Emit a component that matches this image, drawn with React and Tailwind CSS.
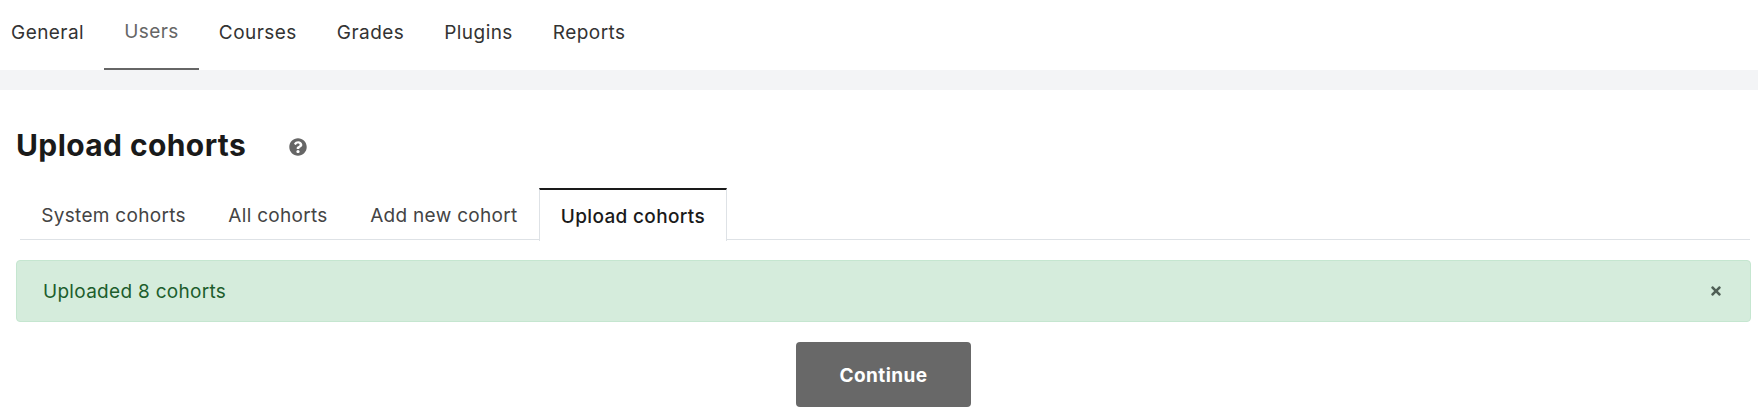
import React from 'react';
import { FaQuestionCircle, FaTimes } from 'react-icons/fa';

const navItems = ['General', 'Users', 'Courses', 'Grades', 'Plugins', 'Reports'];
const tabs = ['System cohorts', 'All cohorts', 'Add new cohort'];

function App() {
    return (
        <div className="w-[1758px] h-[414px] overflow-hidden bg-white font-['Inter',sans-serif] text-[#1d2125]">
            {/* top nav */}
            <div className="flex h-[70px] ml-[-9px] text-[19px] tracking-[0.45px] text-[#333]">
                {navItems.map((item) =>
                    item === 'Users' ? (
                        <div
                            key={item}
                            className="px-5 border-b-2 border-[#666] pt-[20px] leading-[24px] text-[#666]"
                        >
                            {item}
                        </div>
                    ) : (
                        <div key={item} className="px-5 pt-[21px] leading-[24px]">
                            {item}
                        </div>
                    ),
                )}
            </div>
            <div className="h-5 bg-[#f3f4f6]"></div>

            <div className="flex items-center h-[44px] mt-[33px] pl-4">
                <h1 className="text-[30px] font-bold leading-[44px] tracking-[0.4px] text-[#1a1a1a]">Upload cohorts</h1>
                <FaQuestionCircle className="ml-[43px] mt-[3px] text-[#666] text-[18px]" />
            </div>

            {/* tabs */}
            <div className="flex h-[52px] mt-[21px] ml-5 mr-[8px] border-b border-[#dee2e6] text-[19px] tracking-[0.3px] text-[#444]">
                {tabs.map((tab) => (
                    <div key={tab} className="px-[21.25px] pt-[16px] leading-[24px]">
                        {tab}
                    </div>
                ))}
                <div className="h-[53px] px-[21px] pt-[15px] leading-[24px] tracking-[0.35px] font-medium border-x border-[#dee2e6] border-t-2 border-t-[#1a1a1a] bg-white text-[#1a1a1a]">
                    Upload cohorts
                </div>
            </div>

            {/* alert */}
            <div className="flex items-center justify-between h-[62px] mt-5 ml-4 mr-[7px] pl-[26px] pr-[27px] rounded border border-[#c5e6d0] bg-[#d5ecdc] text-[19px] tracking-[0.3px] text-[#1c5d2c]">
                <span className="pt-[2px]">Uploaded 8 cohorts</span>
                <FaTimes className="text-[#4f5f55] text-[14px]" />
            </div>

            <div className="flex justify-center mt-5 ml-4 mr-[7px]">
                <button className="w-[175px] h-[65px] pt-[3px] rounded bg-[#686868] text-white text-[19px] font-bold tracking-[0.4px]">
                    Continue
                </button>
            </div>
        </div>
    );
}

export default App;
